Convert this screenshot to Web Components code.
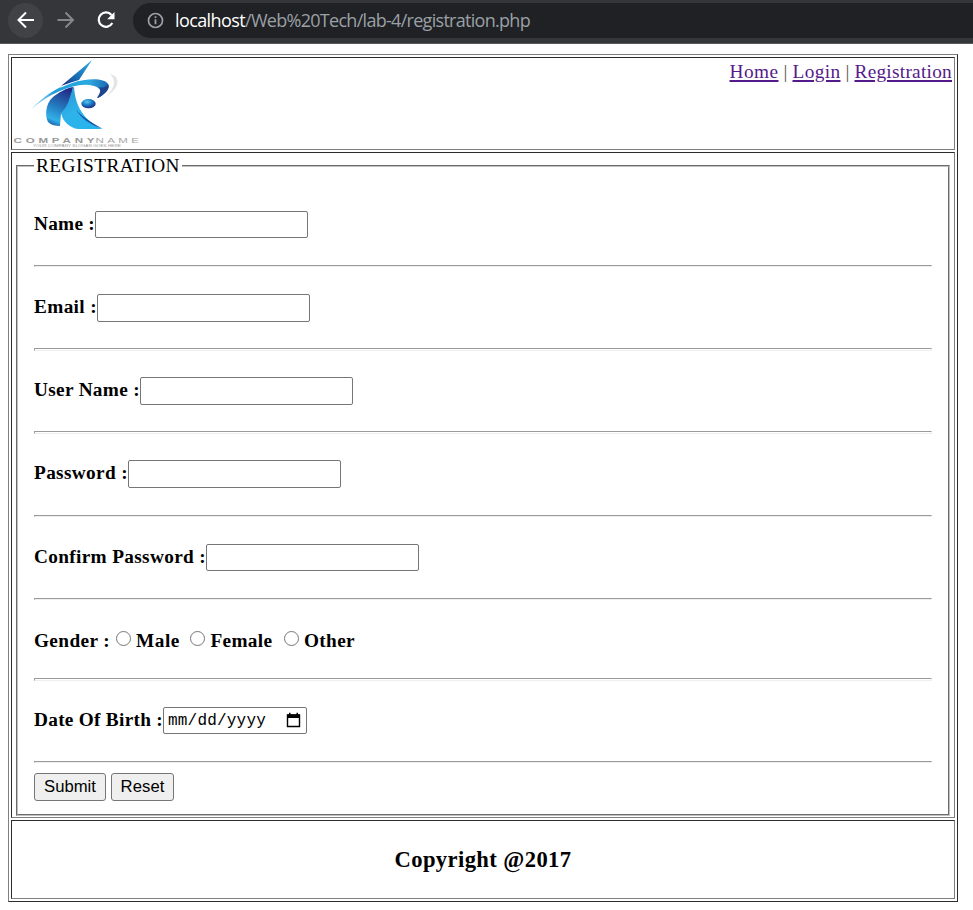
<!DOCTYPE html>
<html lang="en">
<head>
<meta charset="utf-8">
<title>Registration</title>
<style>
body{margin:0;background:#fff;color:#000;font:19.3px/22px "Liberation Serif",serif}
</style>
</head>
<body>
<browser-bar></browser-bar>
<page-frame>
  <site-header slot="head"></site-header>
  <registration-form></registration-form>
  <fit-text slot="foot" width="177">Copyright @2017</fit-text>
</page-frame>
<script>
const define = (name, html, setup) => customElements.define(name, class extends HTMLElement {
  connectedCallback() {
    if (this.shadowRoot) return;
    this.attachShadow({mode: 'open'}).innerHTML = html;
    if (setup) setup(this, this.shadowRoot);
  }
});

define('browser-bar', `<style>
:host{display:flex;box-sizing:border-box;height:44px;background:#35363a;border-bottom:1px solid #58595c;padding:3px 0 5px 8px;align-items:flex-start;font:18px/35px "Open Sans","Noto Sans",sans-serif;color:#9aa0a6}
.b{width:35px;height:35px;border-radius:50%;flex:none}
.b.on{background:#414246}
.b+.b{margin-left:5px}
svg{display:block}
.url{flex:1;height:35px;margin-left:10px;border-radius:18px 0 0 18px;background:#202124;display:flex;padding-left:14px;white-space:pre}
.url svg{margin-right:11px;flex:none}
.host{color:#fff}
</style>
<div class="b on"><svg width="35" height="35" viewBox="0 0 35 35" fill="none" stroke="#fff" stroke-width="2"><path d="M26 17H11M18 9.500L10.500 17l7.500 7.500"/></svg></div>
<div class="b"><svg width="35" height="35" viewBox="0 0 35 35" fill="none" stroke="#86878a" stroke-width="2"><path d="M9.500 17H25M17.500 9.500L25 17l-7.500 7.500"/></svg></div>
<div class="b"><svg width="35" height="35" viewBox="0 0 35 35"><path d="M23.500 12A7.200 7.200 0 1 0 24.300 20" fill="none" stroke="#fff" stroke-width="2.200"/><path d="M26.500 9v7.300h-7.300z" fill="#fff"/></svg></div>
<div class="url"><svg width="17" height="35" viewBox="0 0 17 35"><circle cx="8.500" cy="17.500" r="7" fill="none" stroke="#9aa0a6" stroke-width="1.700"/><path d="M7.600 13.300h1.800v1.800H7.600zM7.600 16.300h1.800v5H7.600z" fill="#9aa0a6"/></svg><fit-text class="host" width="70">localhost</fit-text><fit-text width="285">/Web%20Tech/lab-4/registration.php</fit-text></div>`);

define('page-frame', `<style>
:host{display:grid;box-sizing:border-box;width:950px;height:848px;margin:10px 0 0 8px;padding:2px;gap:2px;grid-template-rows:93px 666px 79px;border:1px solid;border-color:#808080 #2c2c2c #2c2c2c #808080}
div{box-sizing:border-box;border:1px solid;border-color:#2c2c2c #808080 #808080 #2c2c2c}
.foot{display:flex;justify-content:center;align-items:center;font-weight:bold;font-size:22.600px}
</style><div><slot name="head"></slot></div><div><slot></slot></div><div class="foot"><slot name="foot"></slot></div>`);

define('company-logo', `<style>:host{display:block;width:128px;height:90px}svg{display:block}</style>
<svg width="128" height="90" viewBox="12 58 128 90">
<defs>
<linearGradient id="a" x1="0" y1="1" x2="1" y2="0"><stop offset="0" stop-color="#26247b"/><stop offset=".35" stop-color="#1763ad"/><stop offset="1" stop-color="#2cb3ea"/></linearGradient>
<linearGradient id="b" x1="0" y1="0" x2="1" y2="0"><stop offset="0" stop-color="#d3eefa"/><stop offset=".3" stop-color="#1d9edc"/><stop offset=".75" stop-color="#2ba9e1"/><stop offset="1" stop-color="#1a67b1"/></linearGradient>
<linearGradient id="c" x1=".6" y1="0" x2=".3" y2="1"><stop offset="0" stop-color="#222b85"/><stop offset=".5" stop-color="#2478bd"/><stop offset=".85" stop-color="#31b1e8"/><stop offset="1" stop-color="#1c63ae"/></linearGradient>
<linearGradient id="d" x1="0" y1="0" x2=".6" y2="1"><stop offset="0" stop-color="#2a91d0"/><stop offset=".6" stop-color="#2eb3eb"/><stop offset="1" stop-color="#27b4ed"/></linearGradient>
<radialGradient id="e" cx=".4" cy=".3" r=".75"><stop offset="0" stop-color="#58c8f2"/><stop offset=".5" stop-color="#1976be"/><stop offset="1" stop-color="#241f78"/></radialGradient>
</defs>
<path d="M110 74C120 76 121 87 107 96C115 87 116 80 110 74Z" fill="#e4e4e4"/>
<path d="M92 60L61 86L71 82.500L79 80Z" fill="url(#a)"/>
<path d="M53 97C45 104 45 116 48 122C51 125 56 126 60 126L61 113L68 120L73 87C66 88 58 93 53 97Z" fill="url(#c)"/>
<path d="M74 86C69 96 70 104 61 113C63 122 70 128 78 129L102 129C90 123 75 112 74 86Z" fill="url(#d)"/>
<path d="M76 109C80 118 91 125 103 129C91 122 80 116 76 109Z" fill="#1b4c9c"/>
<path d="M30 110C43 97 58 86 72 83C88 78 104 78 108 84C111 88 105 94 98 98C102 92 101 88 94 86C83 83 72 86 60 91C48 96 39 103 30 110Z" fill="url(#b)"/>
<path d="M98 98C107 93 110 88 108 84C104 89 101 87 99 87C102 91 99 94 97 98Z" fill="#21448f"/>
<path d="M60 88L73 82.500L77 81L63 85.500Z" fill="#fff"/>
<ellipse cx="88.500" cy="103.700" rx="7.200" ry="4.600" fill="url(#e)"/>
<g font-family="Liberation Sans,sans-serif">
<g transform="translate(13.500 142.500) scale(1.5 1)" font-size="7.700"><text font-weight="bold" fill="#999" textLength="54">COMPANY</text><text x="54.700" fill="#a6a6a6" textLength="29">NAME</text></g>
<text x="33" y="147" font-size="2.900" fill="#999" textLength="88" lengthAdjust="spacingAndGlyphs">YOUR COMPANY SLOGAN GOES HERE</text></g>
</svg>`);

define('site-header', `<style>
:host{display:flex;justify-content:space-between;align-items:flex-start;height:91px}
nav{display:flex;padding:3px 2px 0 0;line-height:22px;color:#555}
a{color:#551a8b;text-decoration:underline}
</style><company-logo></company-logo><nav><a href="#"><fit-text width="49">Home</fit-text></a><fit-text width="14"> | </fit-text><a href="#"><fit-text width="48">Login</fit-text></a><fit-text width="14"> | </fit-text><a href="#"><fit-text width="97.500">Registration</fit-text></a></nav>`);

// A labelled row closed by an inset rule; "spread" leaves a gap inside the rule.
define('form-row', `<style>
:host{display:flex;flex-direction:column;justify-content:space-between;box-sizing:border-box;height:83px;padding-top:27px;font-weight:bold}
.line{display:flex;align-items:flex-start}
fit-text{line-height:26px}
hr{box-sizing:border-box;width:100%;height:2px;margin:0;border:1px solid;border-color:#9a9a9a #eee #eee #9a9a9a}
:host([spread]) hr{height:3px}
</style><div class="line"><fit-text></fit-text><slot></slot></div><hr>`, (el, root) => {
  const old = root.querySelector('fit-text');
  const label = document.createElement('fit-text');
  label.textContent = el.getAttribute('label');
  label.setAttribute('width', el.getAttribute('w'));
  old.replaceWith(label);
});

define('text-field', `<style>:host{display:block}input{display:block;box-sizing:border-box;width:213px;height:27px;margin:0;border:1px solid #767676;border-radius:2px;background:#fff}:host([tall]) input{height:28px}</style><input>`);

define('radio-option', `<style>:host{display:flex;align-items:flex-start}i{box-sizing:border-box;width:15px;height:15px;border:1px solid #767676;border-radius:50%;margin:3px 5px 0 0;flex:none}</style><i></i><slot></slot>`);

define('date-field', `<style>:host{display:flex;box-sizing:border-box;width:144px;height:27px;border:1px solid #767676;border-radius:2px;padding:0 5px 0 4px;justify-content:space-between;align-items:center;font:16px/25px "Liberation Mono",monospace}fit-text{padding-top:2px}svg{display:block}</style><fit-text width="98">mm/dd/yyyy</fit-text><svg width="15" height="17" viewBox="0 0 15 17"><path d="M1.500 3h12v11.500h-12z" fill="none" stroke="#000" stroke-width="1.400"/><path d="M1 2.500h13V6H1zM3 .8h1.500V3H3zM10.500.8H12V3h-1.500z"/></svg>`);

define('push-button', `<style>:host{display:flex;box-sizing:border-box;height:28px;border:1px solid #767676;border-radius:3px;background:#efefef;justify-content:center;align-items:center;font:16.670px/24px "Liberation Sans",sans-serif}</style><slot></slot>`);

define('registration-form', `<style>
:host{display:block}
fieldset{box-sizing:border-box;margin:1px 4px 0;width:934px;height:662px;min-width:0;padding:0 16px;border:2px groove #c0c0c0}
legend{height:24px;padding:0 2px;line-height:24px}
.rows{padding-top:6px}
.g{display:flex;line-height:26px}
.buttons{display:flex;gap:5px;padding-top:10px}
.gender{height:81px;padding-top:28px}
.date{height:82px;padding-top:26px}
</style>
<fieldset><legend><fit-text width="144">REGISTRATION</fit-text></legend><div class="rows">
<form-row label="Name :" w="61"><text-field></text-field></form-row>
<form-row label="Email :" w="63" spread style="height:84px"><text-field tall></text-field></form-row>
<form-row label="User Name :" w="106" spread style="padding-top:26px"><text-field tall></text-field></form-row>
<form-row label="Password :" w="94" style="padding-top:26px"><text-field tall></text-field></form-row>
<form-row label="Confirm Password :" w="172"><text-field></text-field></form-row>
<form-row label="Gender :" w="76" spread class="gender"><div class="g"><radio-option style="margin-left:6px"><fit-text width="44">Male</fit-text></radio-option><radio-option style="margin-left:10.400px"><fit-text width="62">Female</fit-text></radio-option><radio-option style="margin-left:11.600px"><fit-text width="51">Other</fit-text></radio-option></div></form-row>
<form-row label="Date Of Birth :" w="129" class="date"><date-field></date-field></form-row>
<div class="buttons"><push-button style="width:72px"><fit-text width="52">Submit</fit-text></push-button><push-button style="width:63px"><fit-text width="44">Reset</fit-text></push-button></div>
</div></fieldset>`);

// Text tracked to occupy a given width. Defined last, so that it measures
// with the fonts of the elements around it.
define('fit-text', `<style>:host{display:inline-block;white-space:pre;flex:none;text-decoration:inherit}span{display:inline-block;text-decoration:inherit;text-decoration-thickness:2px;text-underline-offset:2px}</style><span><slot></slot></span>`, (el, root) => {
  const span = root.querySelector('span');
  const w = +el.getAttribute('width');
  const extra = (w - span.getBoundingClientRect().width) / el.textContent.length;
  span.style.letterSpacing = extra + 'px';
  el.style.width = w + 'px';
});
</script>
</body>
</html>
